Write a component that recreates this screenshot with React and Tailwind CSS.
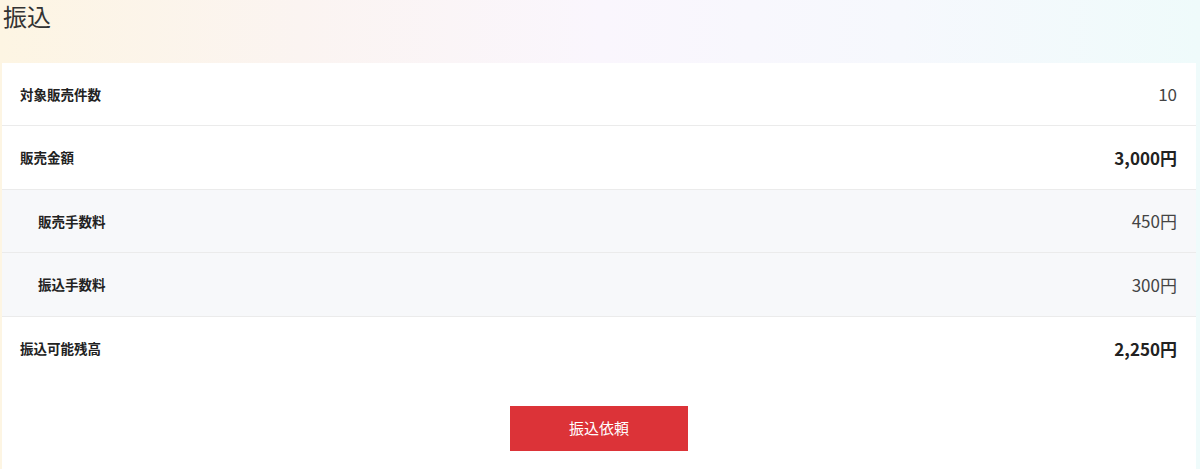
export default function App() {
  const font = { fontFamily: '"Noto Sans CJK JP", "Noto Sans", sans-serif' };
  const rows = [
    { label: "対象販売件数", value: "10", bold: false, sub: false },
    { label: "販売金額", value: "3,000円", bold: true, sub: false },
    { label: "販売手数料", value: "450円", bold: false, sub: true },
    { label: "振込手数料", value: "300円", bold: false, sub: true },
    { label: "振込可能残高", value: "2,250円", bold: true, sub: false },
  ];
  return (
    <div
      className="w-[1200px] h-[469px] overflow-hidden bg-[linear-gradient(90deg,#fdf5e3_0%,#fbf4f1_25%,#faf6fd_50%,#f6f8fd_75%,#effbfb_100%)] text-[#333]"
      style={font}
    >
      <h1 className="h-[63px] pl-[3px] pt-[1px] text-[24px] leading-[30px] font-normal text-[#333]">振込</h1>
      <div className="ml-[2px] mr-[4px] bg-white h-[420px]">
        {rows.map((r, i) => (
          <div
            key={r.label}
            className={`h-[63.4px] flex items-center justify-between pr-[19px] ${
              i < rows.length - 1 ? "border-b border-[#ebebeb]" : ""
            } ${r.sub ? "bg-[#f7f8fa] pl-[36px]" : "bg-white pl-[18px]"}`}
          >
            <span className="text-[13.5px] font-bold text-[#222]">{r.label}</span>
            <span className={`text-[17px] ${r.bold ? "font-bold text-[#222]" : "font-normal text-[#444]"}`}>{r.value}</span>
          </div>
        ))}
        <div className="flex justify-center pt-[26px]">
          <button className="w-[178px] h-[45px] bg-[#dc3338] text-white text-[15px] flex items-center justify-center">
            振込依頼
          </button>
        </div>
      </div>
    </div>
  );
}
